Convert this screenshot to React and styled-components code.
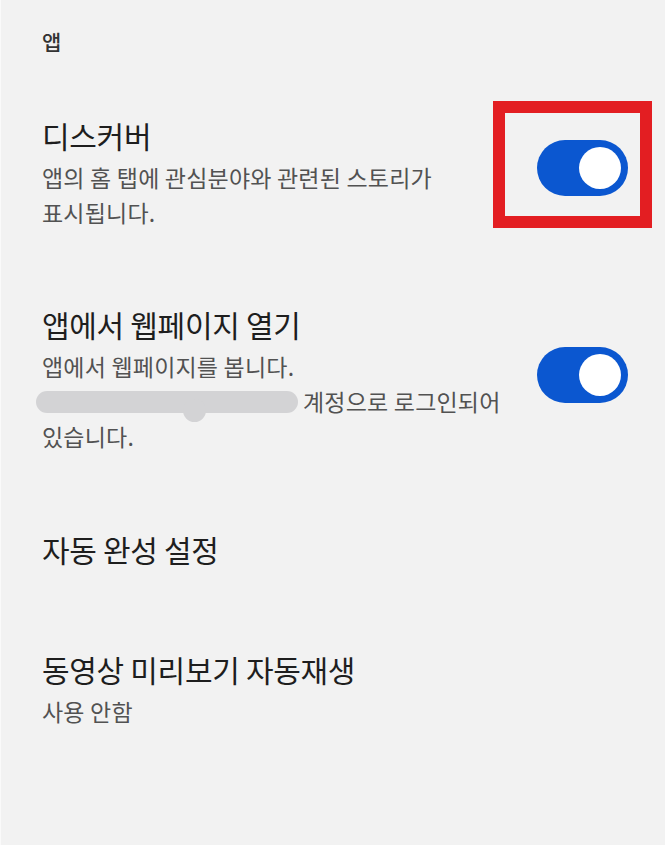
import React, { useState } from 'react';
import styled, { createGlobalStyle } from 'styled-components';

const GlobalStyle = createGlobalStyle`
  html, body {
    margin: 0;
    padding: 0;
    background-color: #f2f2f2;
  }

  body {
    font-family: 'Noto Sans CJK KR', 'Noto Sans', sans-serif;
    -webkit-font-smoothing: antialiased;
  }
`;

const Page = styled.main`
  width: 665px;
  min-height: 845px;
  box-sizing: border-box;
  background-color: #f2f2f2;
  border-left: 1px solid #fafafa;
  padding-top: 29px;
`;

const SectionHeader = styled.h2`
  margin: 0 0 26px;
  padding: 0 41px;
  font-size: 21px;
  line-height: 24px;
  font-weight: 500;
  color: #333;
`;

const Row = styled.section`
  position: relative;
  display: flex;
  align-items: center;
  gap: 24px;
  padding: ${({ $pad }) => $pad || '38px'} 37px ${({ $padBottom }) => $padBottom || '38px'} 41px;
`;

const TextBlock = styled.div`
  flex: 1;
  display: flex;
  flex-direction: column;
  gap: 7px;
`;

const Title = styled.h3`
  margin: 0;
  font-size: 30px;
  line-height: 36px;
  font-weight: 400;
  color: #1e1e1e;
  letter-spacing: -0.3px;
  white-space: nowrap;
`;

const Summary = styled.p`
  margin: 0;
  font-size: 23px;
  line-height: 35px;
  font-weight: 400;
  color: #525252;
  letter-spacing: 0.2px;
  white-space: nowrap;
`;

const Redacted = styled.span`
  position: relative;
  display: inline-block;
  width: 262px;
  height: 22px;
  margin: 0 5px 0 -6px;
  border-radius: 11px;
  background-color: #d3d3d5;
  vertical-align: -2px;

  &::after {
    content: '';
    position: absolute;
    left: 147px;
    top: 8px;
    width: 23px;
    height: 23px;
    border-radius: 50%;
    background-color: #d3d3d5;
  }
`;

const Switch = styled.button`
  flex: none;
  display: flex;
  align-items: center;
  justify-content: ${({ $on }) => ($on ? 'flex-end' : 'flex-start')};
  width: 91px;
  height: 56px;
  margin-bottom: 11px;
  padding: 0 7px;
  box-sizing: border-box;
  border: none;
  border-radius: 28px;
  background-color: ${({ $on }) => ($on ? '#0b57d0' : '#b8b8b8')};
  cursor: pointer;
`;

const Knob = styled.span`
  width: 42px;
  height: 42px;
  border-radius: 50%;
  background-color: #fff;
`;

const Highlight = styled.div`
  position: absolute;
  top: 22px;
  right: 13px;
  width: 159px;
  height: 127px;
  box-sizing: border-box;
  border: 12.5px solid #e31e22;
  pointer-events: none;
`;

const Toggle = ({ defaultOn }) => {
  const [on, setOn] = useState(defaultOn);
  return (
    <Switch type="button" $on={on} onClick={() => setOn(!on)}>
      <Knob />
    </Switch>
  );
};

const App = () => (
  <Page>
    <GlobalStyle />
    <SectionHeader>앱</SectionHeader>

    <Row>
      <TextBlock>
        <Title>디스커버</Title>
        <Summary>
          앱의 홈 탭에 관심분야와 관련된 스토리가
          <br />
          표시됩니다.
        </Summary>
      </TextBlock>
      <Toggle defaultOn />
      <Highlight />
    </Row>

    <Row>
      <TextBlock>
        <Title>앱에서 웹페이지 열기</Title>
        <Summary>
          앱에서 웹페이지를 봅니다.
          <br />
          <Redacted />
          계정으로 로그인되어
          <br />
          있습니다.
        </Summary>
      </TextBlock>
      <Toggle defaultOn />
    </Row>

    <Row $pad="39px" $padBottom="46px">
      <TextBlock>
        <Title>자동 완성 설정</Title>
      </TextBlock>
    </Row>

    <Row>
      <TextBlock>
        <Title>동영상 미리보기 자동재생</Title>
        <Summary>사용 안함</Summary>
      </TextBlock>
    </Row>
  </Page>
);

export default App;
